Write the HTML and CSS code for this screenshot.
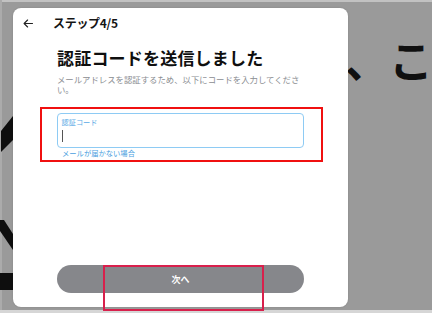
FILE: index.html
```html
<!DOCTYPE html>
<html lang="ja">
<head>
<meta charset="utf-8">
<title>ステップ4/5</title>
<link rel="stylesheet" href="styles.css">
</head>
<body>
<div class="screen">
  <svg class="backdrop" width="432" height="313" viewBox="0 0 432 313" aria-hidden="true">
    <rect x="0" y="0" width="432" height="2" fill="#c2c2c2"/>
    <rect x="0" y="0" width="2" height="313" fill="#ababab"/>
    <rect x="0" y="310" width="432" height="3" fill="#d6d6d6"/>
    <polygon points="13,116 13,140 1,152 1,131" fill="#0e0e0e"/>
    <polygon points="0,220 4,220 13,234 13,250 0,231" fill="#0e0e0e"/>
    <rect x="0" y="273" width="13" height="17" fill="#0e0e0e"/>
  </svg>
  <div class="bg-text">、ここに。</div>

  <div class="modal">
    <div class="modal-header">
      <svg class="back" width="10" height="9" viewBox="0 0 10 9" aria-hidden="true">
        <path d="M9.5 4.5H1.2M4.6 1L1.1 4.5L4.6 8" fill="none" stroke="#222" stroke-width="1.1" stroke-linecap="round" stroke-linejoin="round"/>
      </svg>
      <span class="step">ステップ4/5</span>
    </div>
    <div class="modal-body">
      <h1 class="title">認証コードを送信しました</h1>
      <p class="subtitle">メールアドレスを認証するため、以下にコードを入力してください。</p>
      <div class="field">
        <span class="field-label">認証コード</span>
        <span class="caret"></span>
      </div>
      <a class="help-link">メールが届かない場合</a>
    </div>
    <div class="modal-footer">
      <button class="next">次へ</button>
    </div>
  </div>

  <div class="annot annot-field"></div>
  <div class="annot annot-button"></div>
</div>
</body>
</html>
```

FILE: styles.css
```css
* { box-sizing: border-box; }

html, body {
  margin: 0;
  padding: 0;
}

body {
  font-family: "Noto Sans CJK JP", "Noto Sans", sans-serif;
  background: #9a9a9a;
}

.screen {
  position: relative;
  width: 432px;
  height: 313px;
  overflow: hidden;
  background: #9a9a9a;
  padding-top: 8px;
  padding-left: 13px;
}

.backdrop {
  position: absolute;
  left: 0;
  top: 0;
}

.bg-text {
  position: absolute;
  left: 345px;
  top: 37px;
  font-size: 44px;
  line-height: 1;
  font-weight: 700;
  color: #101010;
  white-space: nowrap;
}

.modal {
  position: relative;
  z-index: 1;
  width: 335px;
  height: 299px;
  background: #fff;
  border-radius: 8px;
  box-shadow: 0 0 2px rgba(0,0,0,0.15);
  display: flex;
  flex-direction: column;
  padding-bottom: 14px;
}

.modal-header {
  height: 30px;
  display: flex;
  align-items: center;
  padding-left: 10px;
  gap: 20px;
}

.back { display: block; }

.step {
  font-size: 12px;
  font-weight: 700;
  color: #141414;
  line-height: 1;
  letter-spacing: -0.3px;
}

.modal-body {
  padding: 9.5px 44px 0 44px;
  display: flex;
  flex-direction: column;
}

.title {
  margin: 0;
  font-size: 17px;
  line-height: 20px;
  font-weight: 700;
  color: #0f0f0f;
  letter-spacing: 0.2px;
}

.subtitle {
  margin: 6px 0 0 0;
  font-size: 8.4px;
  line-height: 10px;
  color: #8a8d91;
}

.field {
  margin-top: 19.5px;
  height: 35px;
  border: 1.5px solid #8ecbf4;
  border-radius: 4px;
  padding: 4px 0 0 3.5px;
  display: flex;
  flex-direction: column;
  align-items: flex-start;
}

.field-label {
  font-size: 7.2px;
  line-height: 9px;
  color: #5aaae6;
}

.caret {
  margin-top: 2.5px;
  width: 1px;
  height: 12px;
  background: #555;
}

.help-link {
  margin-top: 1px;
  padding-left: 5px;
  font-size: 7.3px;
  line-height: 9px;
  color: #4a9fe0;
}

.modal-footer {
  margin-top: auto;
  padding: 0 44px;
}

.next {
  display: block;
  width: 100%;
  height: 28px;
  border: none;
  border-radius: 14px;
  background: #86878b;
  color: #fff;
  font-family: inherit;
  font-size: 9px;
  font-weight: 700;
  line-height: 1;
}

.annot {
  position: absolute;
  z-index: 2;
  pointer-events: none;
}

.annot-field {
  left: 40px;
  top: 107px;
  width: 283px;
  height: 55px;
  border: 2px solid #f01010;
}

.annot-button {
  left: 103px;
  top: 265px;
  width: 161px;
  height: 46px;
  border: 2px solid #d8204c;
}
```
